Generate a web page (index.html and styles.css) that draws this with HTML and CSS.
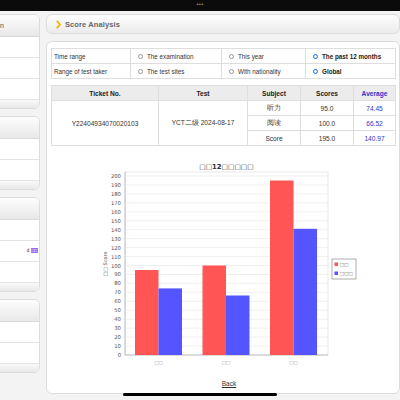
FILE: index.html
```html
<!DOCTYPE html>
<html>
<head>
  <meta charset="UTF-8" />
  <title>Score Analysis</title>
  <link rel="stylesheet" href="styles.css">
</head>
<body>

  <div class="statusbar"><span class="dots">•••</span></div>

  <div class="page">
    <aside class="sidebar">
      <div class="side-panel">
        <div class="side-head">Registration</div>
        <div class="side-row"></div>
        <div class="side-row"></div>
        <div class="side-row"></div>
        <div class="side-foot"></div>
      </div>
      <div class="side-panel">
        <div class="side-head"></div>
        <div class="side-row"></div>
        <div class="side-row"></div>
        <div class="side-foot"></div>
      </div>
      <div class="side-panel">
        <div class="side-head"></div>
        <div class="side-row"></div>
        <div class="side-row note">d <span class="chip">□□</span></div>
        <div class="side-row"></div>
        <div class="side-foot"></div>
      </div>
      <div class="side-panel">
        <div class="side-head"></div>
        <div class="side-row"></div>
        <div class="side-row"></div>
        <div class="side-foot"></div>
      </div>
    </aside>

    <main class="main">
      <div class="title-bar">
        <svg class="chev" width="5" height="9" viewBox="0 0 5 9">
          <polyline points="0.8,0.8 4,4.5 0.8,8.2" fill="none" stroke="#f2b705" stroke-width="1.8" />
        </svg>
        Score Analysis
      </div>

      <div class="content">
        <table class="options">
          <colgroup>
            <col style="width: 79px"><col style="width: 91px"><col style="width: 84px"><col style="width: 90px">
          </colgroup>
          <tr>
            <td>Time range</td>
            <td><span class="radio"></span>The examination</td>
            <td><span class="radio"></span>This year</td>
            <td class="picked"><span class="radio on"></span>The past 12 months</td>
          </tr>
          <tr>
            <td>Range of test taker</td>
            <td><span class="radio"></span>The test sites</td>
            <td><span class="radio"></span>With nationality</td>
            <td class="picked"><span class="radio on"></span>Global</td>
          </tr>
        </table>

        <table class="scores">
          <colgroup>
            <col style="width: 107px"><col style="width: 89px"><col style="width: 53px"><col style="width: 53px"><col style="width: 42px">
          </colgroup>
          <tr>
            <th>Ticket No.</th>
            <th>Test</th>
            <th>Subject</th>
            <th>Scores</th>
            <th class="avg">Average</th>
          </tr>
          <tr>
            <td rowspan="3">Y22404934070020103</td>
            <td rowspan="3">YCT二级 2024-08-17</td>
            <td>听力</td>
            <td>95.0</td>
            <td class="avg">74.45</td>
          </tr>
          <tr>
            <td>阅读</td>
            <td>100.0</td>
            <td class="avg">66.52</td>
          </tr>
          <tr>
            <td>Score</td>
            <td>195.0</td>
            <td class="avg">140.97</td>
          </tr>
        </table>

        <svg class="chart" width="300" height="220" viewBox="0 0 300 220">
          <text class="chart-title" x="153.5" y="15" text-anchor="middle">□□12□□□□□</text>

          <rect x="52" y="18" width="203" height="183" fill="#fff" stroke="#e2e2e2" stroke-width="0.8" />
          <g stroke="#e6e6e6" stroke-width="0.6">
            <line x1="52" x2="255" y1="192.05" y2="192.05" />
            <line x1="52" x2="255" y1="183.1" y2="183.1" />
            <line x1="52" x2="255" y1="174.15" y2="174.15" />
            <line x1="52" x2="255" y1="165.2" y2="165.2" />
            <line x1="52" x2="255" y1="156.25" y2="156.25" />
            <line x1="52" x2="255" y1="147.3" y2="147.3" />
            <line x1="52" x2="255" y1="138.35" y2="138.35" />
            <line x1="52" x2="255" y1="129.4" y2="129.4" />
            <line x1="52" x2="255" y1="120.45" y2="120.45" />
            <line x1="52" x2="255" y1="111.5" y2="111.5" />
            <line x1="52" x2="255" y1="102.55" y2="102.55" />
            <line x1="52" x2="255" y1="93.6" y2="93.6" />
            <line x1="52" x2="255" y1="84.65" y2="84.65" />
            <line x1="52" x2="255" y1="75.7" y2="75.7" />
            <line x1="52" x2="255" y1="66.75" y2="66.75" />
            <line x1="52" x2="255" y1="57.8" y2="57.8" />
            <line x1="52" x2="255" y1="48.85" y2="48.85" />
            <line x1="52" x2="255" y1="39.9" y2="39.9" />
            <line x1="52" x2="255" y1="30.95" y2="30.95" />
            <line x1="52" x2="255" y1="22" y2="22" />
          </g>

          <g class="ticks" text-anchor="end">
            <text x="48" y="203">0</text>
            <text x="48" y="194.05">10</text>
            <text x="48" y="185.1">20</text>
            <text x="48" y="176.15">30</text>
            <text x="48" y="167.2">40</text>
            <text x="48" y="158.25">50</text>
            <text x="48" y="149.3">60</text>
            <text x="48" y="140.35">70</text>
            <text x="48" y="131.4">80</text>
            <text x="48" y="122.45">90</text>
            <text x="48" y="113.5">100</text>
            <text x="48" y="104.55">110</text>
            <text x="48" y="95.6">120</text>
            <text x="48" y="86.65">130</text>
            <text x="48" y="77.7">140</text>
            <text x="48" y="68.75">150</text>
            <text x="48" y="59.8">160</text>
            <text x="48" y="50.85">170</text>
            <text x="48" y="41.9">180</text>
            <text x="48" y="32.95">190</text>
            <text x="48" y="24">200</text>
          </g>

          <line x1="52" x2="52" y1="18" y2="201" stroke="#b5b5b5" stroke-width="0.8" />
          <line x1="52" x2="255" y1="201" y2="201" stroke="#b5b5b5" stroke-width="0.8" />

          <rect x="62" y="116" width="23.5" height="85" fill="#ff5555" />
          <rect x="85.5" y="134.4" width="23.5" height="66.6" fill="#5555ff" />
          <rect x="129.5" y="111.5" width="23.5" height="89.5" fill="#ff5555" />
          <rect x="153" y="141.5" width="23.5" height="59.5" fill="#5555ff" />
          <rect x="197" y="26.5" width="23.5" height="174.5" fill="#ff5555" />
          <rect x="220.5" y="74.8" width="23.5" height="126.2" fill="#5555ff" />

          <g class="cats" text-anchor="middle">
            <text x="85.5" y="210">□□</text>
            <text x="153" y="210">□□</text>
            <text x="220.5" y="210">□□</text>
          </g>

          <text class="axis-label" x="34" y="110" text-anchor="middle" transform="rotate(-90 34 110)">□□ Score</text>

          <rect x="259" y="105" width="24" height="20" fill="#fff" stroke="#8a8a8a" stroke-width="0.7" />
          <rect x="261.5" y="108.5" width="3.5" height="3.5" fill="#ff5555" />
          <rect x="261.5" y="117.5" width="3.5" height="3.5" fill="#5555ff" />
          <text class="legend" x="267" y="112">□□</text>
          <text class="legend" x="267" y="121">□□□</text>
        </svg>

        <div class="back-row"><a class="back" href="#">Back</a></div>
      </div>
    </main>
  </div>

  <div class="home-bar"></div>

</body>
</html>
```

FILE: styles.css
```css
* {
  box-sizing: border-box;
}

body {
  margin: 0;
  width: 400px;
  height: 400px;
  overflow: hidden;
  background: #f3f3f3;
  color: #333;
  font-family: "Liberation Sans", Arial, sans-serif;
}

.statusbar {
  height: 11px;
  background: #0b0b0b;
  display: flex;
  justify-content: center;
  padding-top: 1px;
}

.dots {
  color: #8c8c8c;
  font-size: 6px;
  line-height: 6px;
  letter-spacing: 0.2px;
}

.page {
  display: flex;
  gap: 6px;
  padding-top: 3px;
}

.sidebar {
  width: 120px;
  margin-left: -80px;
  flex-shrink: 0;
  display: flex;
  flex-direction: column;
  gap: 7px;
}

.side-panel {
  background: #fff;
  border: 1px solid #dcdcdc;
  border-radius: 6px;
  overflow: hidden;
}

.side-head {
  height: 22px;
  background: linear-gradient(#fdfdfd, #e8e8e8);
  border-bottom: 1px solid #dadada;
  font-size: 7px;
  line-height: 21px;
  color: #555;
  text-align: right;
  padding-right: 35px;
}

.side-row {
  height: 21px;
  border-bottom: 1px solid #e4e4e4;
}

.side-row.note {
  font-size: 4.5px;
  line-height: 20px;
  color: #442266;
  text-align: right;
  padding-right: 1px;
}

.chip {
  background: #9a6cf2;
  color: #fff;
  padding: 0 1px;
}

.side-foot {
  height: 8px;
  background: linear-gradient(#f9f9f9, #e8e8e8);
}

.main {
  width: 354px;
  flex-shrink: 0;
  display: flex;
  flex-direction: column;
  gap: 7px;
}

.title-bar {
  height: 20px;
  border: 1px solid #dcdcdc;
  border-radius: 6px;
  background: linear-gradient(#fefefe, #ebebeb);
  display: flex;
  align-items: center;
  gap: 4px;
  padding-left: 9px;
  font-size: 7.5px;
  font-weight: bold;
  color: #666;
  letter-spacing: 0.1px;
}

.chev {
  display: block;
}

.content {
  height: 353px;
  background: #fff;
  border: 1px solid #dcdcdc;
  border-radius: 6px;
  padding: 6px 4px 0;
}

.options,
.scores {
  width: 344px;
  border-collapse: collapse;
  table-layout: fixed;
}

.options td {
  height: 15px;
  border: 1px solid #dedede;
  padding: 0 0 0 2px;
  font-size: 6.3px;
  color: #333;
  white-space: nowrap;
}

.options td.picked {
  font-weight: bold;
  color: #222;
}

.radio {
  display: inline-block;
  width: 5px;
  height: 5px;
  border: 0.8px solid #999;
  border-radius: 50%;
  vertical-align: -0.5px;
  margin: 0 4px 0 5px;
}

.radio.on {
  border: 1.8px solid #1e78e0;
  background: #e8f1fc;
}

.scores {
  margin-top: 6px;
}

.scores th,
.scores td {
  height: 15px;
  border: 1px solid #dedede;
  padding: 0;
  text-align: center;
  font-size: 6.6px;
  color: #333;
}

.scores th {
  background: #ececec;
  color: #222;
  font-weight: bold;
}

.scores .avg {
  color: #3434cc;
}

.chart {
  display: block;
  margin: 8px auto 0;
}

.chart text {
  font-family: "DejaVu Sans", "Liberation Sans", sans-serif;
}

.chart-title {
  font-size: 6.8px;
  font-weight: bold;
  fill: #333;
}

.ticks text {
  font-size: 5.3px;
  fill: #555;
}

.cats text {
  font-size: 4.5px;
  fill: #999;
}

.axis-label {
  font-size: 5px;
  fill: #555;
}

.legend {
  font-size: 4.5px;
  fill: #555;
}

.back-row {
  margin-top: 6px;
  text-align: center;
  padding-left: 12px;
  font-size: 6.5px;
}

.back {
  color: #333;
  text-decoration: underline;
}

.home-bar {
  position: fixed;
  left: 123px;
  top: 393px;
  width: 154px;
  height: 3px;
  background: #000;
  border-radius: 2px;
}
```
